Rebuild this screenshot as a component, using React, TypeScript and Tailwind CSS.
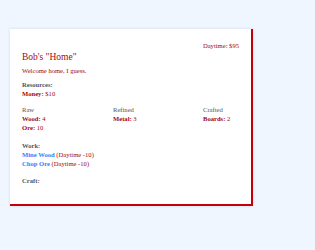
import React from 'react';

const serif = { fontFamily: '"Liberation Serif", "DejaVu Serif", serif' };

const Row: React.FC<{ label: string; value: string | number }> = ({ label, value }) => (
  <div className="leading-[9px]">
    <span className="font-bold">{label}:</span> {value}
  </div>
);

const App: React.FC = () => {
  return (
    <div className="bg-blue-50 w-[315px] h-[250px] pt-[29px] pl-[10px]" style={serif}>
      <div className="w-[243px] h-[177px] bg-white border-r-2 border-b-2 border-red-700 shadow-[0_0_3px_rgba(0,0,0,0.12)] px-3 pt-[13px] text-red-800 text-[6.6px]">
        <div className="text-right leading-[8px]">Daytime: $95</div>
        <h1 className="text-[9.5px] leading-[12px] mt-[1px]">Bob's "Home"</h1>
        <p className="mt-[3px] leading-[9px]">Welcome home, I guess.</p>

        <div className="mt-[5px]">
          <div className="text-[#555] font-bold leading-[9px]">Resources:</div>
          <Row label="Money" value="$10" />
        </div>

        <div className="mt-[7px] grid grid-cols-[91px_90px_1fr]">
          <div>
            <div className="text-[#555] leading-[9px]">Raw</div>
            <Row label="Wood" value={4} />
            <Row label="Ore" value={10} />
          </div>
          <div>
            <div className="text-[#555] leading-[9px]">Refined</div>
            <Row label="Metal" value={3} />
          </div>
          <div>
            <div className="text-[#555] leading-[9px]">Crafted</div>
            <Row label="Boards" value={2} />
          </div>
        </div>

        <div className="mt-[9px]">
          <div className="text-[#555] font-bold leading-[9px]">Work:</div>
          <div className="leading-[9px]">
            <span className="text-blue-500 font-bold">Mine Wood</span> (Daytime -10)
          </div>
          <div className="leading-[9px]">
            <span className="text-blue-500 font-bold">Chop Ore</span> (Daytime -10)
          </div>
        </div>

        <div className="mt-[8px] text-[#555] font-bold leading-[9px]">Craft:</div>
      </div>
    </div>
  );
};

export default App;
